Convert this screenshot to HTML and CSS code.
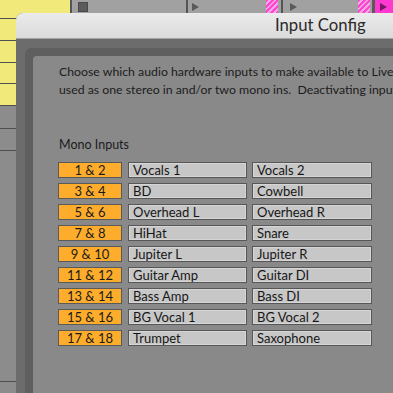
FILE: index.html
```html
<!DOCTYPE html>
<html>
<head>
<meta charset="utf-8">
<link rel="stylesheet" href="styles.css">
</head>
<body>
<div class="screen">
  <div class="strip">
    <div class="clip-yellow"></div>
    <div class="sep sep-a"></div>
    <div class="track track-a"><span class="stop"></span></div>
    <div class="sep"></div>
    <div class="track track-b"><span class="tri"></span><span class="hatch"></span></div>
    <div class="sep"></div>
    <div class="track track-c"><span class="tri"></span><span class="hatch"></span></div>
    <div class="sep sep-c"></div>
    <div class="track track-m"><span class="tri tri-dark"></span></div>
  </div>
  <div class="lanes">
    <div class="lane y h6"></div>
    <div class="lane y h22"></div>
    <div class="lane y h22"></div>
    <div class="lane y h21"></div>
    <div class="lane y h22"></div>
    <div class="lane g h23"></div>
    <div class="lane g h22"></div>
    <div class="lane g h231"></div>
    <div class="lane g rest"></div>
  </div>
  <div class="window">
    <div class="titlebar">Input Config</div>
    <div class="frame">
      <div class="panel">
        <div class="content">
          <p class="desc">Choose which audio hardware inputs to make available to Live's tracks. Every input pair can also be
used as one stereo in and/or two mono ins.  Deactivating inputs will reduce the CPU load.</p>
          <div class="section">Mono Inputs</div>
          <div class="rows">
            <div class="row"><span class="pair">1 &amp; 2</span><span class="name n1">Vocals 1</span><span class="name n2">Vocals 2</span></div>
            <div class="row"><span class="pair">3 &amp; 4</span><span class="name n1">BD</span><span class="name n2">Cowbell</span></div>
            <div class="row"><span class="pair">5 &amp; 6</span><span class="name n1">Overhead L</span><span class="name n2">Overhead R</span></div>
            <div class="row"><span class="pair">7 &amp; 8</span><span class="name n1">HiHat</span><span class="name n2">Snare</span></div>
            <div class="row"><span class="pair">9 &amp; 10</span><span class="name n1">Jupiter L</span><span class="name n2">Jupiter R</span></div>
            <div class="row"><span class="pair">11 &amp; 12</span><span class="name n1">Guitar Amp</span><span class="name n2">Guitar DI</span></div>
            <div class="row"><span class="pair">13 &amp; 14</span><span class="name n1">Bass Amp</span><span class="name n2">Bass DI</span></div>
            <div class="row"><span class="pair">15 &amp; 16</span><span class="name n1">BG Vocal 1</span><span class="name n2">BG Vocal 2</span></div>
            <div class="row"><span class="pair">17 &amp; 18</span><span class="name n1">Trumpet</span><span class="name n2">Saxophone</span></div>
          </div>
        </div>
      </div>
    </div>
  </div>
</div>
</body>
</html>
```

FILE: styles.css
```css
* { box-sizing: border-box; }
html, body { margin: 0; padding: 0; }
body { width: 393px; height: 393px; overflow: hidden; font-family: Lato, "Noto Sans", sans-serif; }

.screen {
  width: 393px;
  height: 393px;
  overflow: hidden;
  display: grid;
  grid-template-columns: 16px 1fr;
  grid-template-rows: 13px 1fr;
  background: #f1ea7a;
}

/* top clip strip */
.strip {
  grid-column: 1 / -1;
  display: flex;
  height: 13px;
}
.clip-yellow { width: 70px; }
.sep { width: 2px; background: #555; }
.sep-c { width: 3px; background: #5a5a5a; }
.track { background: #a1a1a1; display: flex; align-items: center; }
.track-a { width: 114px; padding-left: 6px; align-items: flex-start; padding-top: 2px; }
.stop { width: 10px; height: 10px; background: #5b5b5b; border: 1px solid #4a4a4a; }
.track-b { width: 93px; padding: 0 3px 0 4px; justify-content: space-between; }
.track-c { width: 89px; padding: 0 2px 0 7px; justify-content: space-between; }
.track-m { flex: 1; background: #ff38cf; padding-left: 5px; }
.tri {
  width: 0; height: 0;
  border-left: 7px solid #5a5a5a;
  border-top: 4.5px solid transparent;
  border-bottom: 4.5px solid transparent;
}
.tri-dark { border-left-color: #7a1565; }
.hatch {
  width: 12px;
  height: 13px;
  background: repeating-linear-gradient(-45deg, #ff45d4 0 2px, #f1a6e2 2px 4px);
}

/* left lanes */
.lanes { display: flex; flex-direction: column; }
.lane { border-bottom: 1px solid #4f4f4f; }
.lane.y { background: #f1ea7a; }
.lane.g { background: #8c8c8c; }
.h6 { height: 6px; }
.h21 { height: 21px; }
.h22 { height: 22px; }
.h23 { height: 23px; }
.h231 { height: 231px; }
.rest { flex: 1; border-bottom: none; }

/* window */
.window {
  background: #6c6c6c;
  border-radius: 7px 0 0 0;
  overflow: hidden;
  display: flex;
  flex-direction: column;
}
.titlebar {
  height: 26px;
  background: linear-gradient(#ebebeb, #dadada);
  border-bottom: 1px solid #a5a5a5;
  padding-left: 259px;
  font-size: 16.7px;
  line-height: 25px;
  color: #2a2a2a;
  white-space: nowrap;
}
.frame { flex: 1; padding: 9px 0 0 9px; display: flex; }
.panel { flex: 1; background: #5f5f5f; border-radius: 6px 0 0 0; padding: 8px 0 0 8px; display: flex; }
.content {
  flex: 1;
  background: #898989;
  border-radius: 4px 0 0 0;
  padding: 7px 0 0 25px;
  overflow: hidden;
  color: #1c1c1c;
}
.desc {
  margin: 0 0 0 1px;
  white-space: pre;
  font-size: 12.3px;
  line-height: 18px;
}
.section {
  margin: 37px 0 0 1px;
  font-size: 12.5px;
  line-height: 18px;
}
.rows { margin-top: 8px; display: flex; flex-direction: column; gap: 5px; }
.row { display: flex; height: 16px; }
.pair {
  width: 64px;
  background: #fdad2b;
  border: 1px solid #5a5a5a;
  text-align: center;
  font-size: 13px;
  line-height: 14px;
  color: #1a1a1a;
}
.name {
  background: #c7c7c7;
  border: 1px solid #575757;
  box-shadow: inset 0 0 0 1px #d6d6d6;
  font-size: 13px;
  line-height: 14px;
  padding-left: 4px;
  color: #161616;
  white-space: nowrap;
}
.n1 { width: 119px; margin-left: 6px; }
.n2 { width: 120px; margin-left: 5px; }
```
